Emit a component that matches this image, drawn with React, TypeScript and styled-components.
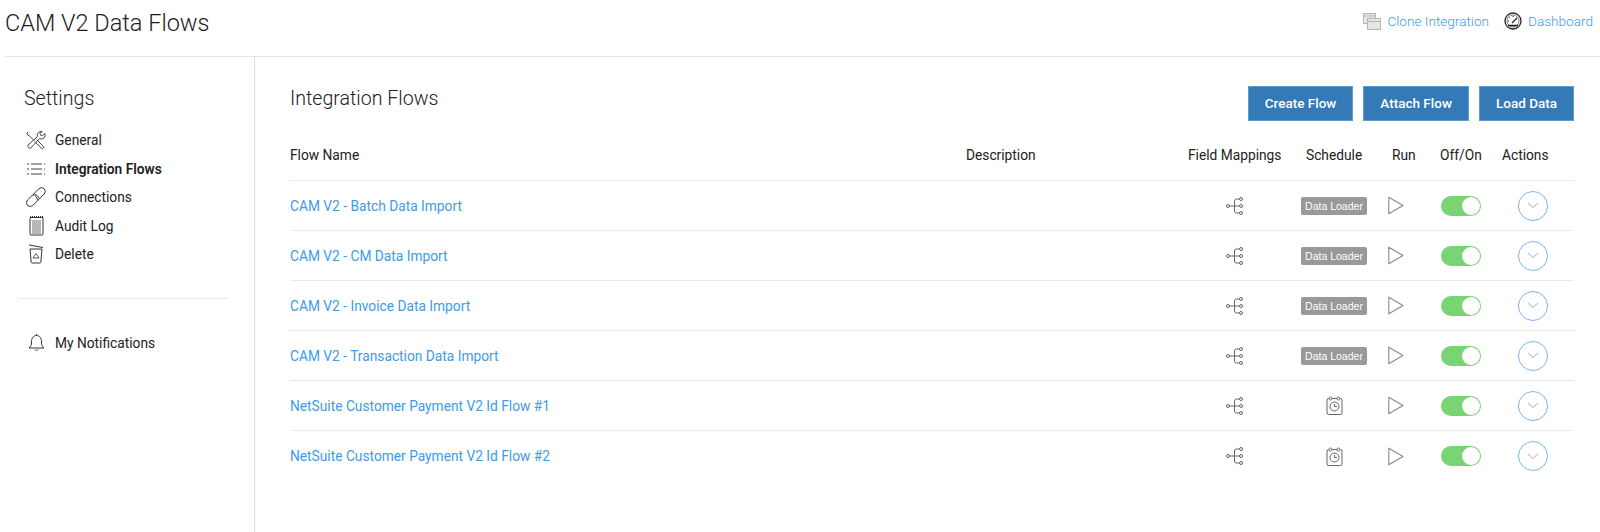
import styled, { createGlobalStyle } from 'styled-components';

const GlobalStyle = createGlobalStyle`
  html, body {
    margin: 0;
    padding: 0;
    background: #fff;
    font-family: Roboto, "Liberation Sans", sans-serif;
    color: #222;
  }
  * { box-sizing: border-box; }
`;

const Page = styled.div`
  width: 1600px;
  height: 532px;
  overflow: hidden;
  padding-left: 5px;
`;

const Header = styled.header`
  height: 57px;
  display: flex;
  justify-content: space-between;
  align-items: flex-start;
  border-bottom: 1px solid #e2e4e6;
`;

const Title = styled.h1`
  margin: 8px 0 0 0;
  font-size: 23.5px;
  line-height: 30px;
  font-weight: 300;
  color: #1c1c1c;
`;

const HeaderLinks = styled.div`
  display: flex;
  align-items: center;
  gap: 15px;
  margin-top: 11px;
  padding-right: 7px;
`;

const HeaderLink = styled.a`
  display: flex;
  align-items: center;
  gap: 6px;
  font-size: 13.6px;
  font-weight: 300;
  line-height: 20px;
  color: #3d9be9;
`;

const Body = styled.div`
  display: flex;
  height: 475px;
`;

const Sidebar = styled.aside`
  width: 250px;
  flex-shrink: 0;
  border-right: 1px solid #d8e0e6;
  padding: 29px 26px 0 14px;
`;

const SideHeading = styled.h2`
  margin: 0 0 14px 5px;
  font-size: 19.6px;
  line-height: 26px;
  font-weight: 300;
  color: #222;
`;

const NavList = styled.nav`
  display: flex;
  flex-direction: column;
`;

const NavItem = styled.a<{ $active?: boolean }>`
  height: 28.5px;
  display: flex;
  align-items: center;
  gap: 9px;
  padding-left: 7px;
  font-size: 13.75px;
  font-weight: ${(props) => (props.$active ? 600 : 400)};
  color: #222;
`;

const NavIcon = styled.span`
  width: 20px;
  height: 20px;
  display: flex;
  align-items: center;
  justify-content: center;
  flex-shrink: 0;
`;

const SideDivider = styled.hr`
  margin: 29px 0 30px 0;
  border: 0;
  border-top: 1px solid #e8eaec;
`;

const Main = styled.main`
  flex: 1;
  padding: 29px 26px 0 35px;
`;

const MainTop = styled.div`
  display: flex;
  justify-content: space-between;
  align-items: flex-start;
`;

const MainHeading = styled.h2`
  margin: 0;
  font-size: 19.6px;
  line-height: 26px;
  font-weight: 300;
  color: #222;
`;

const Buttons = styled.div`
  display: flex;
  gap: 10px;
`;

const Button = styled.button`
  height: 35px;
  padding: 0 16px 2px;
  border: 1px solid #5a9bd0;
  border-radius: 0;
  background: #337ab7;
  color: #fff;
  font-family: inherit;
  font-size: 13.5px;
  font-weight: 500;
`;

const columns = '676px 222px 113px 87px 52px 62px 71px';

const HeadRow = styled.div`
  display: grid;
  grid-template-columns: ${columns};
  align-items: center;
  height: 50px;
  margin-top: 10px;
  padding-bottom: 1px;
  font-size: 13.75px;
  color: #222;
  border-bottom: 1px solid #eeeeee;
`;

const Row = styled.div`
  display: grid;
  grid-template-columns: ${columns};
  align-items: center;
  height: 50px;
  border-bottom: 1px solid #e9e9e9;

  &:last-child {
    border-bottom: 0;
  }
`;

const Cell = styled.div<{ $indent?: number }>`
  display: flex;
  align-items: center;
  padding-left: ${(props) => props.$indent ?? 0}px;
`;

const FlowLink = styled.a`
  font-size: 13.75px;
  color: #3d9be9;
`;

const Badge = styled.span`
  width: 66px;
  height: 18px;
  display: flex;
  align-items: center;
  justify-content: center;
  border-radius: 2px;
  background: #999;
  color: #fff;
  font-size: 10.5px;
  font-family: "Liberation Sans", Arial, sans-serif;
`;

const Toggle = styled.span`
  position: relative;
  display: block;
  width: 40px;
  height: 20px;
  border-radius: 10px;
  background: #79d473;

  &::after {
    content: '';
    position: absolute;
    top: 1px;
    right: 1px;
    width: 18px;
    height: 18px;
    border-radius: 50%;
    background: #fff;
  }
`;

const ActionButton = styled.span`
  width: 30px;
  height: 30px;
  border: 1px solid #7db3f5;
  border-radius: 50%;
  display: flex;
  align-items: center;
  justify-content: center;
`;

const Wrench = () => (
  <svg width="20" height="18" viewBox="0 0 20 18" fill="none" stroke="#333" strokeWidth="0.900">
    <path d="M2 1 .8 2.200l1 2 1.500.500L8 9.500M10.500 8.500l6.800 6.800a1.200 1.200 0 0 1-1.800 1.900L8.500 10.500" />
    <path d="M18.800 2.500 16.500 4.800l-2-.6-.6-2L16.200.600a3.800 3.800 0 0 0-4.700 5L2 14a2.200 2.200 0 0 0 2.800 3l8.700-9.500a3.800 3.800 0 0 0 5.300-5Z" />
  </svg>
);

const ListLines = () => (
  <svg width="18" height="14" viewBox="0 0 18 14" fill="none" stroke="#444" strokeWidth="1">
    <path d="M0 2h2M0 7h2M0 12h2M4 2h11M4 7h11M4 12h11M17 2h1M17 7h1M17 12h1" />
  </svg>
);

const Chain = () => (
  <svg width="20" height="20" viewBox="0 0 20 20" fill="none" stroke="#333" strokeWidth="1">
    <path d="M1.500 13 12.800 1.800a3.700 3.700 0 0 1 5.400 5.200L7 18.300a3.800 3.800 0 0 1-5.500-5.300Z" />
    <path d="M7 8c2 0 4 2 4.500 5M8.500 7c2 .5 4 2.500 4.500 4.500" />
  </svg>
);

const Notepad = () => (
  <svg width="15" height="20" viewBox="0 0 15 20" fill="none" stroke="#333" strokeWidth="1">
    <rect x="1" y="1.500" width="13" height="17.500" rx="1" />
    <path d="M1 1h13" strokeWidth="2" strokeDasharray="1 1" />
    <path d="M3 5h9M3 7h9M3 9h9M3 11h9M3 13h9M3 15h9M3 17h9" strokeWidth="0.700" />
  </svg>
);

const Trash = () => (
  <svg width="16" height="20" viewBox="0 0 16 20" fill="none" stroke="#333" strokeWidth="1">
    <path d="M1 1l14 2.500" />
    <path d="M2 5h12l-1.200 13.300a1 1 0 0 1-1 .7H4.200a1 1 0 0 1-1-.7Z" />
    <path d="M8 9.500l3 4.500H5Z" strokeWidth="0.800" />
  </svg>
);

const Bell = () => (
  <svg width="17" height="19" viewBox="0 0 17 19" fill="none" stroke="#333" strokeWidth="1">
    <path d="M1 15c1.800-1.500 2.500-3 2.500-6 0-4 2-6.500 5-6.500s5 2.500 5 6.500c0 3 .7 4.500 2.500 6Z" />
    <path d="M7 16.500a1.700 1.700 0 0 0 3 0" />
    <path d="M8.500 1v1.500" />
  </svg>
);

const CloneWindows = () => (
  <svg width="18" height="17" viewBox="0 0 18 17" fill="#e6e6e6" stroke="#b5b5b5" strokeWidth="1">
    <rect x=".5" y=".5" width="12" height="10" />
    <path d="M.5 3h12" />
    <rect x="4.500" y="5.500" width="13" height="11" />
    <path d="M4.500 8.500h13" />
  </svg>
);

const Gauge = () => (
  <svg width="18" height="18" viewBox="0 0 18 18" fill="none" stroke="#222" strokeWidth="1">
    <circle cx="9" cy="9" r="8" strokeWidth="1.300" />
    <circle cx="9" cy="9" r="6" strokeWidth="0.600" />
    <path d="M8 11l5-5" strokeWidth="1.200" />
    <path d="M4 13.500h10" strokeWidth="1.500" />
    <path d="M4 9h1M9 4v1M5.500 5.500l.7.7" />
  </svg>
);

const MappingTree = () => (
  <svg width="17" height="18" viewBox="0 0 17 18" fill="none" stroke="#666" strokeWidth="1">
    <circle cx="2" cy="9" r="1.500" />
    <circle cx="15" cy="2" r="1.500" />
    <circle cx="15" cy="9" r="1.500" />
    <circle cx="15" cy="16" r="1.500" />
    <path d="M3.500 9h10M13.500 2H10.500a2 2 0 0 0-2 2v10a2 2 0 0 0 2 2h3" />
  </svg>
);

const ScheduleClock = () => (
  <svg width="17" height="19" viewBox="0 0 17 19" fill="none" stroke="#666" strokeWidth="1">
    <rect x="1" y="2.500" width="15" height="16" rx="1.500" />
    <circle cx="4.500" cy="2.500" r="1.500" fill="#fff" />
    <circle cx="12.500" cy="2.500" r="1.500" fill="#fff" />
    <circle cx="8.500" cy="10.500" r="4.500" />
    <path d="M8.500 8v2.500H11" />
  </svg>
);

const RunTriangle = () => (
  <svg width="16" height="19" viewBox="0 0 16 19" fill="none" stroke="#8a8a8a" strokeWidth="1.100">
    <path d="M.8 1.200v16.600L15 9.500Z" strokeLinejoin="round" />
  </svg>
);

const Chevron = () => (
  <svg width="12" height="7" viewBox="0 0 12 7" fill="none" stroke="#c9c9c9" strokeWidth="1.200">
    <path d="M1 1l5 4.500L11 1" />
  </svg>
);

interface Flow {
  name: string;
  loader: boolean;
}

const flows: Flow[] = [
  { name: 'CAM V2 - Batch Data Import', loader: true },
  { name: 'CAM V2 - CM Data Import', loader: true },
  { name: 'CAM V2 - Invoice Data Import', loader: true },
  { name: 'CAM V2 - Transaction Data Import', loader: true },
  { name: 'NetSuite Customer Payment V2 Id Flow #1', loader: false },
  { name: 'NetSuite Customer Payment V2 Id Flow #2', loader: false },
];

export default function App() {
  return (
    <Page>
      <GlobalStyle />
      <Header>
        <Title>CAM V2 Data Flows</Title>
        <HeaderLinks>
          <HeaderLink>
            <CloneWindows />
            Clone Integration
          </HeaderLink>
          <HeaderLink>
            <Gauge />
            Dashboard
          </HeaderLink>
        </HeaderLinks>
      </Header>
      <Body>
        <Sidebar>
          <SideHeading>Settings</SideHeading>
          <NavList>
            <NavItem><NavIcon><Wrench /></NavIcon>General</NavItem>
            <NavItem $active><NavIcon><ListLines /></NavIcon>Integration Flows</NavItem>
            <NavItem><NavIcon><Chain /></NavIcon>Connections</NavItem>
            <NavItem><NavIcon><Notepad /></NavIcon>Audit Log</NavItem>
            <NavItem><NavIcon><Trash /></NavIcon>Delete</NavItem>
          </NavList>
          <SideDivider />
          <NavList>
            <NavItem><NavIcon><Bell /></NavIcon>My Notifications</NavItem>
          </NavList>
        </Sidebar>
        <Main>
          <MainTop>
            <MainHeading>Integration Flows</MainHeading>
            <Buttons>
              <Button>Create Flow</Button>
              <Button>Attach Flow</Button>
              <Button>Load Data</Button>
            </Buttons>
          </MainTop>
          <HeadRow>
            <div>Flow Name</div>
            <div>Description</div>
            <Cell>Field Mappings</Cell>
            <Cell $indent={5}>Schedule</Cell>
            <Cell $indent={4}>Run</Cell>
            <Cell>Off/On</Cell>
            <Cell>Actions</Cell>
          </HeadRow>
          {flows.map((flow) => (
            <Row key={flow.name}>
              <FlowLink>{flow.name}</FlowLink>
              <div />
              <Cell $indent={38}><MappingTree /></Cell>
              <Cell $indent={flow.loader ? 0 : 25}>
                {flow.loader ? <Badge>Data Loader</Badge> : <ScheduleClock />}
              </Cell>
              <Cell><RunTriangle /></Cell>
              <Cell $indent={1}><Toggle /></Cell>
              <Cell $indent={16}><ActionButton><Chevron /></ActionButton></Cell>
            </Row>
          ))}
        </Main>
      </Body>
    </Page>
  );
}
